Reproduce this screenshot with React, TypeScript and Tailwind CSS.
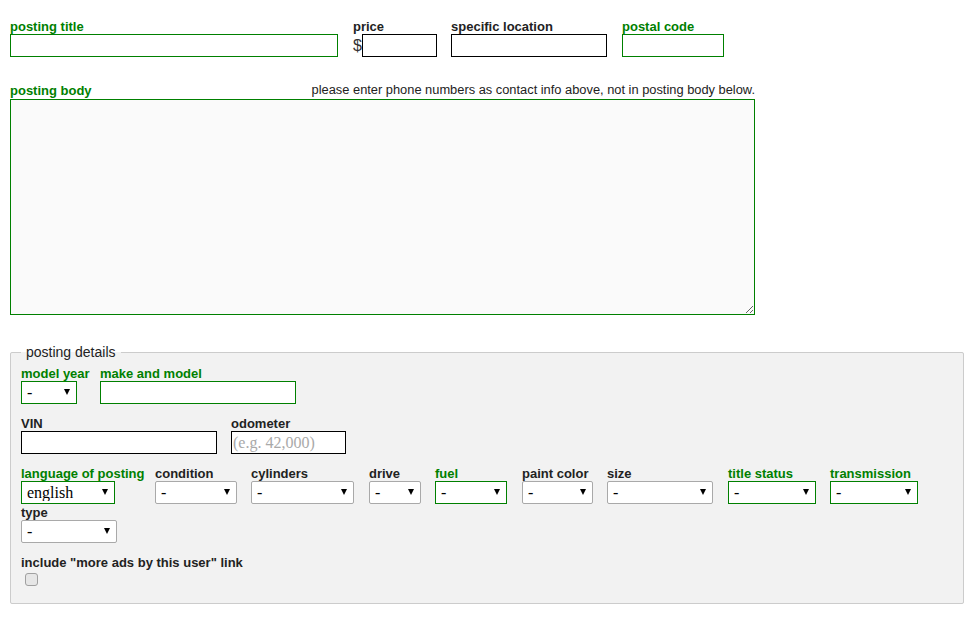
import React from "react";

type Field = {
  label: string;
  required?: boolean;
  w: number;
  sw: number;
  value: string;
};

// dropdowns in the lower details block, in order (they wrap)
const detailSelects: Field[] = [
  { label: "language of posting", required: true, w: 120, sw: 94, value: "english" },
  { label: "condition", w: 82, sw: 82, value: "-" },
  { label: "cylinders", w: 104, sw: 103, value: "-" },
  { label: "drive", w: 52, sw: 52, value: "-" },
  { label: "fuel", required: true, w: 73, sw: 72, value: "-" },
  { label: "paint color", w: 71, sw: 71, value: "-" },
  { label: "size", w: 107, sw: 106, value: "-" },
  { label: "title status", required: true, w: 88, sw: 88, value: "-" },
  { label: "transmission", required: true, w: 88, sw: 88, value: "-" },
  { label: "type", w: 96, sw: 96, value: "-" },
];

const Label = ({ text, required }: { text: string; required?: boolean }) => (
  <div
    className={`h-[16px] text-[13px] font-bold leading-[18px] whitespace-nowrap ${
      required ? "text-[#008000]" : "text-[#222]"
    }`}
  >
    {text}
  </div>
);

const Select = ({
  value,
  width,
  required,
}: {
  value: string;
  width: number;
  required?: boolean;
}) => (
  <div className="relative" style={{ width }}>
    <select
      defaultValue={value}
      className={`block h-[23px] w-full appearance-none bg-white pl-[5px] font-['Liberation_Serif',serif] text-[16px] leading-none text-black outline-none ${
        required ? "border border-[#008000]" : "rounded-[2px] border border-[#a9a9a9]"
      }`}
    >
      <option value={value}>{value}</option>
    </select>
    <svg
      className="pointer-events-none absolute right-[7px] top-[8px]"
      width="6"
      height="6"
      viewBox="0 0 6 6"
    >
      <polygon points="0,0 6,0 3,6" fill="#000" />
    </svg>
  </div>
);

const TextInput = ({
  width,
  required,
  placeholder,
}: {
  width: number;
  required?: boolean;
  placeholder?: string;
}) => (
  <input
    type="text"
    placeholder={placeholder}
    style={{ width }}
    className={`block h-[23px] bg-white pl-[1px] font-['Liberation_Serif',serif] text-[16px] text-black outline-none placeholder:text-[#a9a9a9] ${
      required ? "border border-[#008000]" : "border border-black"
    }`}
  />
);

export default function App() {
  return (
    <div className="h-[618px] w-[974px] bg-white pl-[10px] pt-[18px] font-['Liberation_Sans',Arial,sans-serif] text-[#222]">
      {/* title / price / location / postal */}
      <div className="flex items-start">
        <div className="mr-[15px]">
          <Label text="posting title" required />
          <TextInput width={328} required />
        </div>
        <div className="mr-[14px]">
          <Label text="price" />
          <div className="flex items-center">
            <span className="w-[9px] text-[16px] leading-[23px] text-[#333]">$</span>
            <TextInput width={75} />
          </div>
        </div>
        <div className="mr-[15px]">
          <Label text="specific location" />
          <TextInput width={156} />
        </div>
        <div>
          <Label text="postal code" required />
          <TextInput width={102} required />
        </div>
      </div>

      {/* posting body */}
      <div className="mt-[25px] w-[745px]">
        <div className="flex items-end justify-between">
          <Label text="posting body" required />
          <span className="text-[12.85px] leading-[16px] text-[#222]">
            please enter phone numbers as contact info above, not in posting body below.
          </span>
        </div>
        <textarea className="mt-[1px] block h-[216px] w-[745px] border border-[#008000] bg-[#fafafa] outline-none" />
      </div>

      {/* posting details */}
      <fieldset className="mt-[29px] w-[954px] rounded-[2px] border border-[#cccccc] bg-[#f2f2f2] px-[10px] pb-[17px] pt-[5px]">
        <legend className="px-[5px] text-[14px] leading-[16px] text-[#222]">posting details</legend>

        <div className="flex items-start">
          <div className="mr-[10px] w-[69px]">
            <Label text="model year" required />
            <Select value="-" width={56} required />
          </div>
          <div>
            <Label text="make and model" required />
            <TextInput width={196} required />
          </div>
        </div>

        <div className="mt-[11px] flex items-start">
          <div className="mr-[14px]">
            <Label text="VIN" />
            <TextInput width={196} />
          </div>
          <div>
            <Label text="odometer" />
            <TextInput width={115} placeholder="(e.g. 42,000)" />
          </div>
        </div>

        <div className="mt-[11px] flex flex-wrap gap-x-[14px]">
          {detailSelects.map((f) => (
            <div key={f.label} style={{ width: f.w }}>
              <Label text={f.label} required={f.required} />
              <Select value={f.value} width={f.sw} required={f.required} />
            </div>
          ))}
        </div>

        <div className="mt-[11px]">
          <Label text={'include "more ads by this user" link'} />
          <input
            type="checkbox"
            className="ml-[4px] mt-[3px] block h-[13px] w-[13px] appearance-none rounded-[3px] border border-[#a0a0a0] bg-[#e6e6e6]"
          />
        </div>
      </fieldset>
    </div>
  );
}
